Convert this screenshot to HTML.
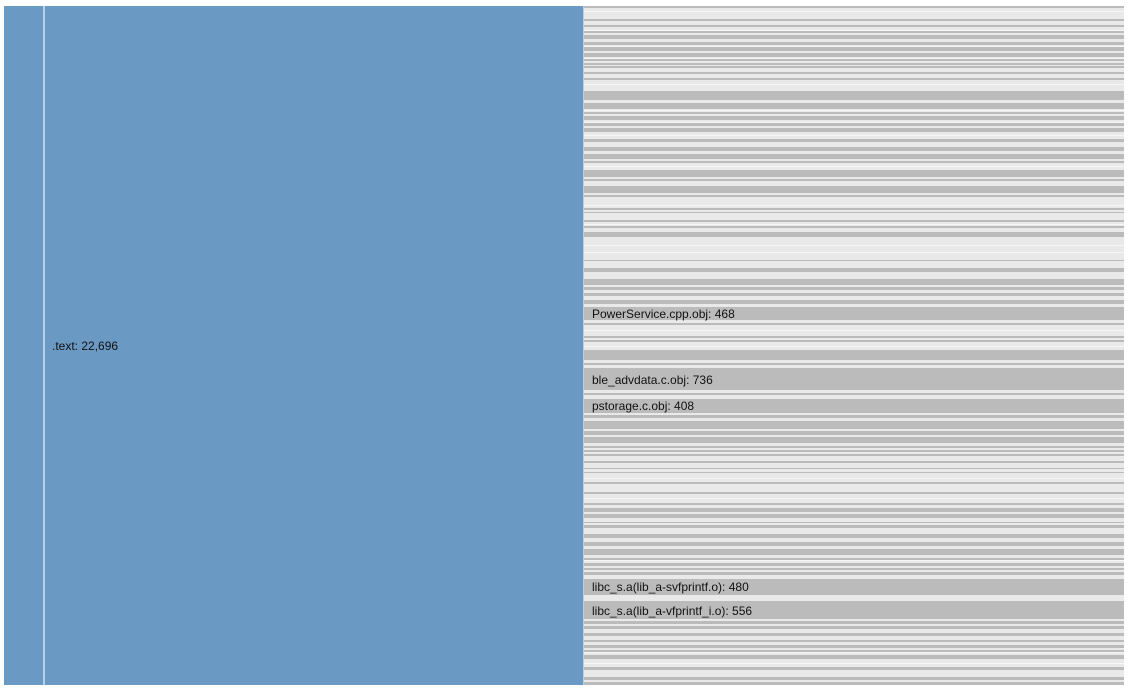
<!DOCTYPE html>
<html><head><meta charset="utf-8"><style>
html,body{margin:0;padding:0;background:#fff;width:1134px;height:690px;overflow:hidden}
svg text{font-family:"Liberation Sans",sans-serif;font-size:12px;fill:#111}
</style></head><body>
<svg width="1134" height="690" xmlns="http://www.w3.org/2000/svg">
<rect x="4" y="6" width="39" height="679" fill="#6a9ac4"/>
<rect x="43" y="6" width="2" height="679" fill="#b8d0e6"/>
<rect x="45" y="6" width="538" height="679" fill="#6a9ac4"/>
<rect x="583" y="6" width="1" height="679" fill="#b8d0e6"/>
<rect x="584" y="6" width="540" height="679" fill="#e9e9e9"/>
<g fill="#f6f6f6">
<rect x="584" y="11" width="540" height="1"/><rect x="584" y="30" width="540" height="1"/><rect x="584" y="46" width="540" height="1"/>
<rect x="584" y="58" width="540" height="1"/><rect x="584" y="66" width="540" height="1"/><rect x="584" y="84" width="540" height="1"/>
<rect x="584" y="110" width="540" height="1"/><rect x="584" y="122" width="540" height="1"/><rect x="584" y="135" width="540" height="1"/>
<rect x="584" y="166" width="540" height="1"/><rect x="584" y="205" width="540" height="1"/><rect x="584" y="224" width="540" height="1"/>
<rect x="584" y="245" width="540" height="1"/><rect x="584" y="252" width="540" height="1"/><rect x="584" y="330" width="540" height="1"/>
<rect x="584" y="346" width="540" height="1"/><rect x="584" y="478" width="540" height="1"/><rect x="584" y="498" width="540" height="1"/>
<rect x="584" y="560" width="540" height="1"/><rect x="584" y="652" width="540" height="1"/><rect x="584" y="663" width="540" height="1"/>
</g>
<g fill="#bbbbbb">
<rect x="584" y="6" width="540" height="2"/>
<rect x="584" y="19" width="540" height="2"/><rect x="584" y="25" width="540" height="2"/><rect x="584" y="31" width="540" height="2"/>
<rect x="584" y="35" width="540" height="4"/><rect x="584" y="42" width="540" height="3"/><rect x="584" y="47" width="540" height="4"/>
<rect x="584" y="53" width="540" height="4"/><rect x="584" y="59" width="540" height="2"/><rect x="584" y="63" width="540" height="2"/>
<rect x="584" y="66" width="540" height="2"/><rect x="584" y="72" width="540" height="2"/><rect x="584" y="78" width="540" height="2"/>
<rect x="584" y="91" width="540" height="9"/><rect x="584" y="103" width="540" height="3"/><rect x="584" y="106" width="540" height="3"/>
<rect x="584" y="112" width="540" height="2"/><rect x="584" y="116" width="540" height="4"/><rect x="584" y="123" width="540" height="3"/>
<rect x="584" y="128" width="540" height="4"/><rect x="584" y="139" width="540" height="3"/><rect x="584" y="147" width="540" height="4"/>
<rect x="584" y="154" width="540" height="5"/><rect x="584" y="161" width="540" height="2"/><rect x="584" y="170" width="540" height="7"/>
<rect x="584" y="179" width="540" height="2"/><rect x="584" y="186" width="540" height="7"/><rect x="584" y="195" width="540" height="2"/>
<rect x="584" y="208" width="540" height="2"/><rect x="584" y="212" width="540" height="1"/><rect x="584" y="220" width="540" height="2"/>
<rect x="584" y="226" width="540" height="2"/><rect x="584" y="232" width="540" height="5"/><rect x="584" y="260" width="540" height="1"/>
<rect x="584" y="268" width="540" height="4"/><rect x="584" y="279" width="540" height="6"/><rect x="584" y="287" width="540" height="3"/>
<rect x="584" y="293" width="540" height="3"/><rect x="584" y="300" width="540" height="4"/><rect x="584" y="307" width="540" height="13"/>
<rect x="584" y="323" width="540" height="2"/><rect x="584" y="336" width="540" height="2"/><rect x="584" y="340" width="540" height="2"/>
<rect x="584" y="350" width="540" height="10"/><rect x="584" y="363" width="540" height="2"/><rect x="584" y="368" width="540" height="22"/>
<rect x="584" y="393" width="540" height="2"/><rect x="584" y="399" width="540" height="14"/><rect x="584" y="415" width="540" height="3"/>
<rect x="584" y="421" width="540" height="8"/><rect x="584" y="431" width="540" height="4"/><rect x="584" y="437" width="540" height="6"/>
<rect x="584" y="446" width="540" height="2"/><rect x="584" y="450" width="540" height="2"/><rect x="584" y="454" width="540" height="2"/>
<rect x="584" y="461" width="540" height="2"/><rect x="584" y="468" width="540" height="1"/><rect x="584" y="472" width="540" height="1"/>
<rect x="584" y="482" width="540" height="2"/><rect x="584" y="492" width="540" height="2"/><rect x="584" y="503" width="540" height="2"/>
<rect x="584" y="508" width="540" height="4"/><rect x="584" y="514" width="540" height="4"/><rect x="584" y="522" width="540" height="1"/>
<rect x="584" y="525" width="540" height="3"/><rect x="584" y="534" width="540" height="4"/><rect x="584" y="542" width="540" height="4"/>
<rect x="584" y="549" width="540" height="6"/><rect x="584" y="558" width="540" height="2"/><rect x="584" y="563" width="540" height="3"/>
<rect x="584" y="568" width="540" height="2"/><rect x="584" y="572" width="540" height="3"/><rect x="584" y="579" width="540" height="16"/>
<rect x="584" y="601" width="540" height="18"/><rect x="584" y="621" width="540" height="3"/><rect x="584" y="626" width="540" height="3"/>
<rect x="584" y="633" width="540" height="3"/><rect x="584" y="640" width="540" height="2"/><rect x="584" y="645" width="540" height="3"/>
<rect x="584" y="650" width="540" height="2"/><rect x="584" y="655" width="540" height="4"/><rect x="584" y="667" width="540" height="3"/>
<rect x="584" y="677" width="540" height="3"/><rect x="584" y="682" width="540" height="3"/>
</g>
<text x="52" y="350">.text: 22,696</text>
<text x="592" y="318">PowerService.cpp.obj: 468</text>
<text x="592" y="384">ble_advdata.c.obj: 736</text>
<text x="592" y="410">pstorage.c.obj: 408</text>
<text x="592" y="591">libc_s.a(lib_a-svfprintf.o): 480</text>
<text x="592" y="615">libc_s.a(lib_a-vfprintf_i.o): 556</text>
</svg>
</body></html>
